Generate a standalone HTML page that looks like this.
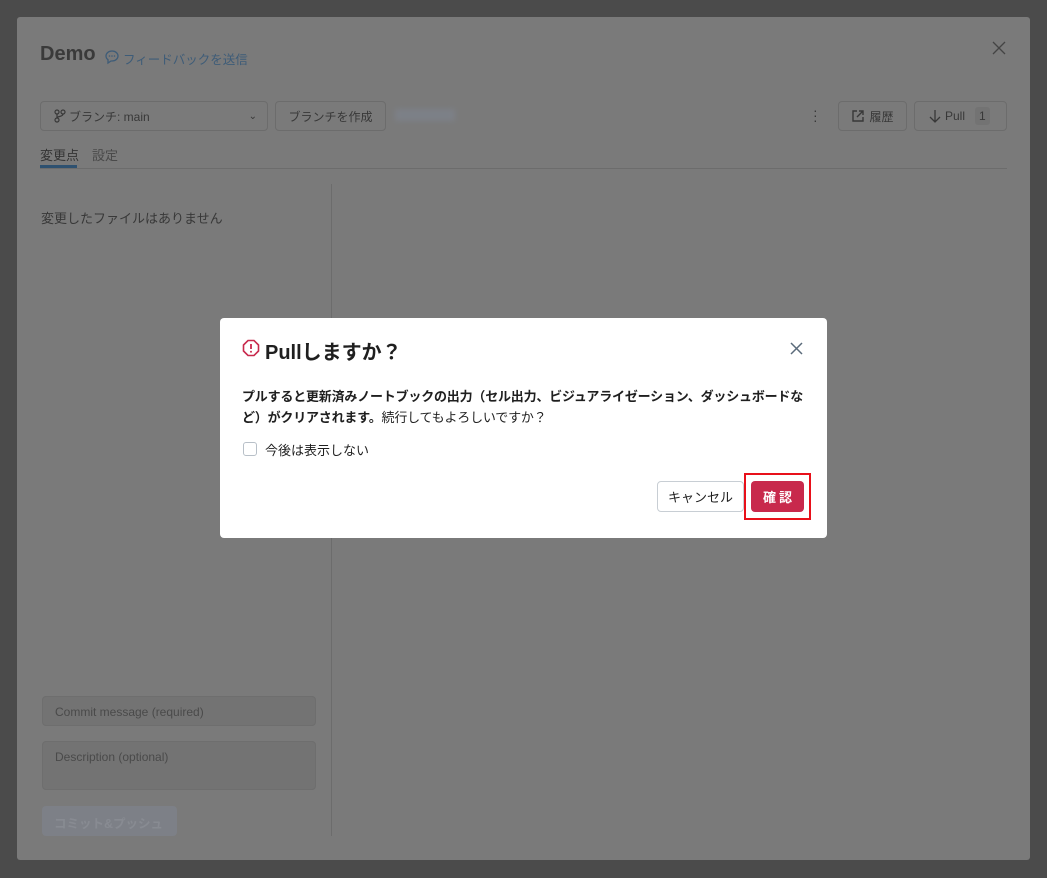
<!DOCTYPE html>
<html><head><meta charset="utf-8"><style>
*{box-sizing:border-box;margin:0;padding:0}
body{width:1047px;height:878px;background:#4b4b4b;font-family:"Liberation Sans","Noto Sans CJK JP",sans-serif;position:relative;overflow:hidden}
.a{position:absolute;white-space:nowrap}
.panel{left:17px;top:17px;width:1013px;height:843px;background:#7a7a7a;border-radius:3px}
.btn{border:1px solid #6c6c6c;border-radius:4px;font-size:12px;color:#383838;display:flex;align-items:center}
.dlg{left:220px;top:318px;width:607px;height:220px;background:#fff;border-radius:4px}
</style></head><body>
<div class="a panel"></div>
<div class="a" style="left:40px;top:43px;font-size:20px;font-weight:bold;color:#3a3a3a">Demo</div>
<svg class="a" style="left:104px;top:49px" width="16" height="16" viewBox="0 0 16 16"><path d="M8 2C4.5 2 2 4.3 2 7c0 1.5.8 2.8 2 3.7V14l3-2h1c3.5 0 6-2.3 6-5S11.5 2 8 2z" fill="none" stroke="#3e5c78" stroke-width="1.3"/><circle cx="5.5" cy="7" r=".8" fill="#3e5c78"/><circle cx="8" cy="7" r=".8" fill="#3e5c78"/><circle cx="10.5" cy="7" r=".8" fill="#3e5c78"/></svg>
<div class="a" style="left:123px;top:49px;font-size:12.5px;color:#3e5c78">フィードバックを送信</div>
<svg class="a" style="left:992px;top:41px" width="14" height="14" viewBox="0 0 14 14"><path d="M1 1l12 12M13 1L1 13" stroke="#444" stroke-width="1.3"/></svg>
<div class="a btn" style="left:40px;top:101px;width:228px;height:30px;padding-left:13px">
<svg width="12" height="14" viewBox="0 0 12 14" style="margin-right:3px"><circle cx="3" cy="3" r="2" fill="none" stroke="#383838" stroke-width="1.2"/><circle cx="9" cy="3" r="2" fill="none" stroke="#383838" stroke-width="1.2"/><circle cx="3" cy="11" r="2" fill="none" stroke="#383838" stroke-width="1.2"/><path d="M3 5v4M9 5c0 3-6 2-6 4" fill="none" stroke="#383838" stroke-width="1.2"/></svg>ブランチ: main<span style="position:absolute;right:10px;font-size:10px">⌄</span></div>
<div class="a btn" style="left:275px;top:101px;width:111px;height:30px;justify-content:center">ブランチを作成</div>
<div class="a" style="left:395px;top:109px;width:60px;height:12px;background:#7f8591;filter:blur(3px);opacity:.6"></div>
<div class="a" style="left:813px;top:108px;font-size:14px;color:#383838;line-height:5px">·<br>·<br>·</div>
<div class="a btn" style="left:838px;top:101px;width:69px;height:30px;justify-content:center">
<svg width="14" height="14" viewBox="0 0 14 14" style="margin-right:4px"><path d="M6 2H2v10h10V8M8 2h4v4M12 2L6 8" fill="none" stroke="#383838" stroke-width="1.4"/></svg>履歴</div>
<div class="a btn" style="left:914px;top:101px;width:93px;height:30px;padding-left:14px">
<svg width="12" height="14" viewBox="0 0 12 14" style="margin-right:4px"><path d="M6 1v12M1 8l5 5 5-5" fill="none" stroke="#383838" stroke-width="1.3"/></svg>Pull <span style="margin-left:10px;background:#737373;padding:2px 4px;border-radius:3px">1</span></div>
<div class="a" style="left:40px;top:145px;font-size:13px;color:#333">変更点</div>
<div class="a" style="left:92px;top:145px;font-size:13px;color:#4a4a4a">設定</div>
<div class="a" style="left:40px;top:165px;width:37px;height:3px;background:#2e5170"></div>
<div class="a" style="left:40px;top:168px;width:967px;height:1px;background:#6c6c6c"></div>
<div class="a" style="left:331px;top:184px;width:1px;height:652px;background:#6c6c6c"></div>
<div class="a" style="left:41px;top:208px;font-size:13px;color:#383838">変更したファイルはありません</div>
<div class="a" style="left:42px;top:696px;width:274px;height:30px;border:1px solid #6e6e6e;border-radius:4px;background:#737373;font-size:12px;color:#4a4a4a;padding:8px 12px">Commit message (required)</div>
<div class="a" style="left:42px;top:741px;width:274px;height:49px;border:1px solid #6e6e6e;border-radius:4px;background:#737373;font-size:12px;color:#4a4a4a;padding:8px 12px">Description (optional)</div>
<div class="a" style="left:42px;top:806px;width:135px;height:30px;border-radius:4px;background:#7d8087;font-size:12.5px;color:#888b92;padding:7px 12px;font-weight:bold">コミット&amp;プッシュ</div>
<div class="a dlg"></div>
<svg class="a" style="left:242px;top:339px" width="18" height="18" viewBox="0 0 18 18"><path d="M6 1.5h6L16.5 6v6L12 16.5H6L1.5 12V6z" fill="none" stroke="#c8294c" stroke-width="1.6"/><path d="M9 5v5" stroke="#c8294c" stroke-width="1.8"/><circle cx="9" cy="12.7" r="1" fill="#c8294c"/></svg>
<div class="a" style="left:265px;top:336px;font-size:20px;font-weight:bold;color:#1f1f1f">Pullしますか？</div>
<svg class="a" style="left:790px;top:342px" width="13" height="13" viewBox="0 0 13 13"><path d="M1 1l11 11M12 1L1 12" stroke="#5a6a7a" stroke-width="1.5"/></svg>
<div class="a" style="left:242px;top:386px;font-size:13px;line-height:21px;color:#1f1f1f;letter-spacing:-0.2px"><b>プルすると更新済みノートブックの出力（セル出力、ビジュアライゼーション、ダッシュボードな<br>ど）がクリアされます。</b>続行してもよろしいですか？</div>
<div class="a" style="left:243px;top:442px;width:14px;height:14px;border:1px solid #b8c0c8;border-radius:3px"></div>
<div class="a" style="left:265px;top:440px;font-size:13px;color:#1f1f1f">今後は表示しない</div>
<div class="a" style="left:657px;top:481px;width:87px;height:31px;border:1px solid #c8ced4;border-radius:4px;font-size:13px;color:#1f1f1f;display:flex;align-items:center;justify-content:center">キャンセル</div>
<div class="a" style="left:744px;top:473px;width:67px;height:47px;border:2px solid #e8101a"></div>
<div class="a" style="left:751px;top:481px;width:53px;height:31px;background:#c8294c;border-radius:4px;font-size:13px;color:#fff;font-weight:bold;display:flex;align-items:center;justify-content:center;letter-spacing:3px;padding-left:3px">確認</div>
</body></html>
